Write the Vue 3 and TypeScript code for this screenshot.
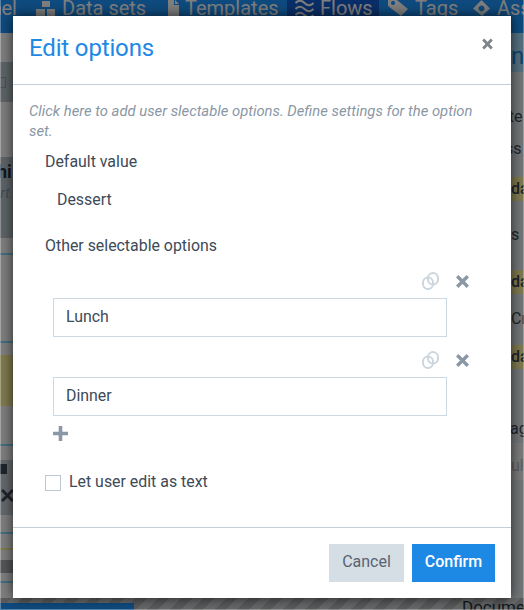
<script setup lang="ts">
import { ref } from "vue";

interface NavItem {
  label: string
  icon: string
  active?: boolean
}

const navItems: NavItem[] = [
  { label: "Data sets", icon: "data" },
  { label: "Templates", icon: "file" },
  { label: "Flows", icon: "flows", active: true },
  { label: "Tags", icon: "tag" },
  { label: "Assets", icon: "diamond" },
];

const defaultValue = ref<string>("Dessert");
const options = ref<string[]>(["Lunch", "Dinner"]);
const editAsText = ref<boolean>(false);
</script>

<template>
  <div class="page">
    <div class="backdrop-page">
      <nav class="topbar">
        <span class="nav-cut"><span>Channel</span></span>
        <span v-for="item in navItems" :key="item.label" :class="['nav-item', item.icon, { active: item.active }]">
          <svg v-if="item.icon === 'data'" class="nav-icon" width="19" height="16" viewBox="0 0 19 16">
            <path d="M6 1h8v6H6zM0 9h9v7H0zM11 9h8v7h-8z" fill="currentColor" />
          </svg>
          <svg v-else-if="item.icon === 'file'" class="nav-icon" width="11" height="16" viewBox="0 0 11 16">
            <path d="M0 0h6v5h5v11H0zM7 0l4 4H7z" fill="currentColor" />
          </svg>
          <svg v-else-if="item.icon === 'flows'" class="nav-icon" width="19" height="16" viewBox="0 0 19 16">
            <path d="M.5 3c3-3 6-3 9 0s6 3 9 0M.5 9c3-3 6-3 9 0s6 3 9 0M.5 15c3-3 6-3 9 0s6 3 9 0" fill="none" stroke="currentColor" stroke-width="2" />
          </svg>
          <svg v-else-if="item.icon === 'tag'" class="nav-icon" width="20" height="16" viewBox="0 0 20 16">
            <path d="M0 0h9l11 9-7 7L0 6zM5 1a2 2 0 1 0 .01 0z" fill="currentColor" fill-rule="evenodd" />
          </svg>
          <svg v-else class="nav-icon" width="17" height="16" viewBox="0 0 17 16">
            <path d="M8.500 0l8.500 8.500-8 7.500-9-7.500zM8.500 5.500a3 3 0 1 0 .01 0z" fill="currentColor" fill-rule="evenodd" />
          </svg>
          <span>{{ item.label }}</span>
        </span>
      </nav>

      <div class="strips">
        <div class="strip left">
          <div class="l-block"><span class="l-box"></span></div>
          <div class="l-band">
            <div class="l-title">hi</div>
            <div class="l-sub">ert</div>
          </div>
          <div class="l-line first"></div>
          <div class="l-line second"></div>
          <div class="l-yellow"></div>
          <div class="l-line third"></div>
          <div class="l-dark">
            <span class="l-copy"></span>
            <svg class="l-x" width="13" height="13" viewBox="0 0 13 13">
              <path d="M1 1l11 11M12 1L1 12" stroke="currentColor" stroke-width="3" fill="none" />
            </svg>
          </div>
          <div class="l-line fourth"></div>
          <div class="l-line gold"></div>
          <div class="l-grey"></div>
          <div class="l-line fifth"></div>
        </div>

        <div class="strip right">
          <div class="r-head"><span>ne</span></div>
          <div class="r-text t1">ate</div>
          <div class="r-text t2">ss</div>
          <div class="r-yellow y1">da</div>
          <div class="r-text t3">s</div>
          <div class="r-yellow y2">da</div>
          <div class="r-text t4">Cr</div>
          <div class="r-yellow y3">da</div>
          <div class="r-text t5">ag</div>
          <div class="r-light">ult</div>
        </div>
      </div>

      <div class="bottom">
        <div class="bottom-blue"></div>
        <div class="bottom-doc">Document</div>
      </div>
    </div>

    <div class="overlay"></div>

    <div class="modal">
      <header class="modal-head">
        <h2>Edit options</h2>
        <svg class="close" width="11" height="12" viewBox="0 0 11 12">
          <path d="M1.200 1.500l8.600 9M9.800 1.500l-8.600 9" stroke="currentColor" stroke-width="2.800" fill="none" />
        </svg>
      </header>

      <div class="modal-body">
        <p class="hint">Click here to add user slectable options. Define settings for the option set.</p>
        <div class="field-label">Default value</div>
        <div class="default-value">{{ defaultValue }}</div>
        <div class="field-label other">Other selectable options</div>

        <div v-for="(opt, i) in options" :key="i" :class="['option', { first: i === 0 }]">
          <div class="option-tools">
            <svg class="link" width="17" height="18" viewBox="0 0 17 18">
              <rect x="1" y="5.500" width="10" height="11.500" rx="5" fill="none" stroke="currentColor" stroke-width="2" />
              <rect x="6" y="1" width="10" height="11.500" rx="5" fill="none" stroke="currentColor" stroke-width="2" />
            </svg>
            <svg class="remove" width="13" height="13" viewBox="0 0 13 13">
              <path d="M1.200 1.200l10.600 10.600M11.800 1.200L1.200 11.800" stroke="currentColor" stroke-width="3.400" fill="none" />
            </svg>
          </div>
          <input class="option-input" type="text" :value="opt" />
        </div>

        <svg class="add" width="15" height="15" viewBox="0 0 15 15">
          <path d="M7.500 0v15M0 7.500h15" stroke="currentColor" stroke-width="3.600" fill="none" />
        </svg>

        <label class="check-row">
          <input v-model="editAsText" type="checkbox" class="check" />
          <span class="check-text">Let user edit as text</span>
        </label>
      </div>

      <footer class="modal-foot">
        <button class="btn cancel">Cancel</button>
        <button class="btn confirm">Confirm</button>
      </footer>
    </div>

    <div class="window-edge"></div>
  </div>
</template>

<style scoped>
* {
  box-sizing: border-box;
  margin: 0;
  padding: 0;
}

.page {
  position: relative;
  width: 524px;
  height: 610px;
  overflow: hidden;
  font-family: Roboto, sans-serif;
  color: #3d4a58;
}

.backdrop-page {
  position: absolute;
  inset: 0;
  display: flex;
  flex-direction: column;
  background: #fff;
}

.topbar {
  height: 33px;
  flex: none;
  display: flex;
  align-items: flex-start;
  background: #1e96ff;
  color: #fff;
  font-size: 20px;
  line-height: 16px;
  white-space: nowrap;
  overflow: hidden;
}

.nav-cut {
  width: 36px;
  flex: none;
  display: flex;
  justify-content: flex-end;
  padding-right: 19px;
}

.nav-item {
  display: flex;
  height: 16px;
  align-items: flex-start;
  flex: none;
}

.nav-icon {
  flex: none;
}

.nav-item.data {
  width: 132px;
  gap: 7px;
}

.nav-item.file {
  width: 119px;
  gap: 6px;
}

.nav-item.flows {
  width: 92px;
  padding-left: 8px;
  gap: 6px;
  background: #145ed0;
  overflow: hidden;
}

.nav-item.tag {
  width: 85px;
  margin-left: 9px;
  gap: 7px;
}

.nav-item.diamond {
  gap: 7px;
}

.strips {
  flex: 1;
  display: flex;
  justify-content: space-between;
}

.strip {
  width: 13px;
  overflow: hidden;
  font-size: 16px;
  white-space: nowrap;
  display: flex;
  flex-direction: column;
}

.strip > * {
  flex: none;
}

.l-block {
  height: 40px;
  margin-top: 29px;
  background: #bcc8d0;
  display: flex;
  align-items: center;
}

.l-box {
  width: 6px;
  height: 11px;
  border: 1px solid #9aa4ac;
  border-left: none;
}

.l-band {
  height: 81px;
  margin-top: 55px;
  background: #bcc8d0;
  overflow: hidden;
}

.l-title {
  margin: 5px 0 0 -3px;
  font-size: 18px;
  font-weight: 700;
  line-height: 20px;
  color: #26323f;
}

.l-sub {
  margin: 2px 0 0 -7px;
  font-style: italic;
  font-size: 14px;
  line-height: 18px;
  color: #8a97a5;
}

.l-line {
  height: 2px;
  background: #8adcff;
}

.l-line.first {
  margin-top: 15px;
}

.l-line.second {
  margin-top: 86px;
}

.l-yellow {
  height: 51px;
  margin-top: 12px;
  background: #fef49e;
}

.l-line.third {
  margin-top: 38px;
}

.l-dark {
  height: 55px;
  margin-top: 14px;
  background: #ccd2d8;
  overflow: hidden;
  position: relative;
}

.l-copy {
  display: block;
  width: 7px;
  height: 10px;
  margin-top: 4px;
  background: #3d4a58;
}

.l-x {
  display: block;
  margin: 15px 0 0 1px;
  color: #3d4a58;
}

.l-line.fourth {
  margin-top: 17px;
}

.l-line.gold {
  margin-top: 14px;
  background: #fef49e;
}

.l-grey {
  height: 13px;
  margin-top: 10px;
  background: #a8acb0;
}

.l-line.fifth {
  margin-top: 8px;
}

.strip.right {
  background: #e6ecf0;
}

.r-head {
  height: 39px;
  padding-top: 11px;
  background: #a8e0ff;
  font-size: 24px;
  line-height: 24px;
  color: #1e88e5;
  margin-left: 0;
}

.r-text {
  line-height: 18px;
}

.r-text.t1 {
  margin-top: 36px;
  margin-left: -11px;
}

.r-text.t2 {
  margin-top: 14px;
  margin-left: -6px;
}

.r-yellow {
  height: 24px;
  line-height: 24px;
  background: #fef49e;
  font-weight: 500;
}

.r-yellow.y1 {
  margin-top: 19px;
}

.r-text.t3 {
  margin-top: 25px;
  margin-left: 0;
}

.r-yellow.y2 {
  margin-top: 26px;
}

.r-text.t4 {
  margin-top: 16px;
}

.r-yellow.y3 {
  margin-top: 17px;
}

.r-text.t5 {
  margin-top: 51px;
  margin-left: -1px;
}

.r-light {
  margin-top: 5px;
  height: 37px;
  padding-top: 14px;
  line-height: 18px;
  background: #f6f6f6;
  color: #b8bec4;
}

.bottom {
  position: absolute;
  left: 0;
  right: 0;
  bottom: 0;
  height: 12px;
  background: repeating-linear-gradient(135deg, #b4b6b8 0 8px, #d0d2d4 8px 16px);
}

.bottom-blue {
  width: 134px;
  height: 7px;
  margin-top: 5px;
  background: #1e96ff;
}

.bottom-doc {
  position: absolute;
  left: 462px;
  top: -1px;
  font-size: 17px;
  line-height: 20px;
  color: #26323f;
}

.overlay {
  position: absolute;
  inset: 0;
  background: rgba(0, 0, 0, 0.5);
}

.window-edge {
  position: absolute;
  inset: 0;
  border: 1px solid rgba(255, 255, 255, 0.3);
  border-top: none;
  pointer-events: none;
}

.modal {
  position: absolute;
  left: 13px;
  top: 16px;
  width: 498px;
  height: 582px;
  display: flex;
  flex-direction: column;
  background: #fff;
  box-shadow: 0 0 12px rgba(0, 0, 0, 0.7);
}

.modal-head {
  height: 69px;
  flex: none;
  display: flex;
  justify-content: space-between;
  align-items: flex-start;
  padding: 16px 18px 0 16px;
  border-bottom: 1px solid #c3ced9;
}

.modal-head h2 {
  font-size: 24px;
  font-weight: 400;
  line-height: 32px;
  letter-spacing: -0.15px;
  color: #1e88e5;
}

.close {
  margin-top: 6px;
  color: #808487;
}

.modal-body {
  flex: 1;
  padding: 16px 16px 0;
  display: flex;
  flex-direction: column;
  align-items: flex-start;
}

.hint {
  font-size: 14.8px;
  font-style: italic;
  line-height: 20px;
  color: #8a97a5;
}

.field-label {
  font-size: 15.9px;
  line-height: 20px;
  margin-top: 11px;
  margin-left: 16px;
}

.field-label.other {
  margin-top: 26px;
}

.default-value {
  font-size: 15.9px;
  line-height: 20px;
  margin-top: 18px;
  margin-left: 28px;
}

.option {
  width: 394px;
  margin-left: 24px;
}

.option-tools {
  height: 40px;
  width: 416px;
  display: flex;
  justify-content: flex-end;
  align-items: center;
  gap: 17px;
  padding-top: 6px;
}

.option.first .option-tools {
  height: 42px;
  padding-top: 8px;
}

.link {
  color: #ccd6de;
}

.remove {
  color: #8a97a5;
}

.option-input {
  display: block;
  width: 394px;
  height: 39px;
  padding: 0 12px 2px;
  border: 1px solid #ccd9e3;
  border-radius: 0;
  outline: none;
  font-family: inherit;
  font-size: 15.9px;
  color: #3d4a58;
  background: #fff;
}

.add {
  margin: 10px 0 0 24px;
  color: #8a97a5;
  flex: none;
}

.check-row {
  display: flex;
  align-items: center;
  gap: 8px;
  margin: 33px 0 0 16px;
  font-size: 15.9px;
  line-height: 20px;
}

.check {
  appearance: none;
  width: 16px;
  height: 16px;
  border: 1px solid #bcc8d3;
  background: #fff;
}

.check-text {
  margin-top: -2px;
}

.modal-foot {
  height: 71px;
  flex: none;
  display: flex;
  justify-content: flex-end;
  align-items: flex-start;
  gap: 8px;
  padding: 16px 16px 0 0;
  border-top: 1px solid #c3ced9;
}

.btn {
  height: 38px;
  padding-bottom: 3px;
  border: none;
  border-radius: 0;
  font-family: inherit;
  font-size: 16px;
}

.cancel {
  width: 75px;
  background: #d6dee5;
  color: #566370;
}

.confirm {
  width: 83px;
  background: #1e88e5;
  color: #fff;
  font-weight: 500;
}
</style>
